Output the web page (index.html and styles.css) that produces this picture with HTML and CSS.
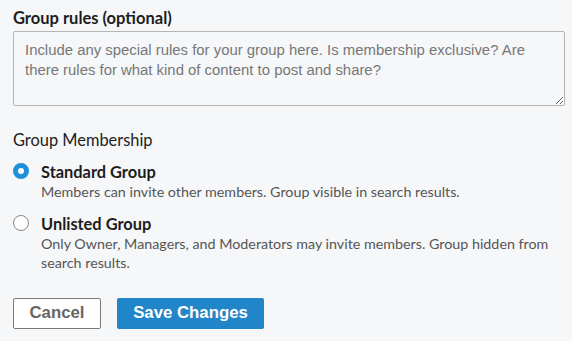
FILE: index.html
```html
<!DOCTYPE html>
<html lang="en">
<head>
    <meta charset="UTF-8">
    <meta name="viewport" content="width=device-width, initial-scale=1.0">
    <title>Group settings</title>
    <link rel="stylesheet" href="styles.css">
</head>
<body>
    <form class="group-form">
        <label class="field-label" for="rules">Group rules (optional)</label>
        <textarea id="rules" class="rules-box" placeholder="Include any special rules for your group here. Is membership exclusive? Are there rules for what kind of content to post and share?"></textarea>

        <div class="section-title">Group Membership</div>

        <label class="option">
            <input type="radio" name="membership" value="standard" checked>
            <span class="radio-mark"></span>
            <span class="option-text">
                <span class="option-name">Standard Group</span>
                <span class="option-desc">Members can invite other members. Group visible in search results.</span>
            </span>
        </label>

        <label class="option">
            <input type="radio" name="membership" value="unlisted">
            <span class="radio-mark"></span>
            <span class="option-text">
                <span class="option-name">Unlisted Group</span>
                <span class="option-desc">Only Owner, Managers, and Moderators may invite members. Group hidden from search results.</span>
            </span>
        </label>

        <div class="actions">
            <button type="button" class="btn btn-cancel">Cancel</button>
            <button type="submit" class="btn btn-save">Save Changes</button>
        </div>
    </form>
</body>
</html>
```

FILE: styles.css
```css
body {
    margin: 0;
    background-color: #f6f7f9;
    font-family: Lato, "Open Sans", sans-serif;
    color: #222;
}
.group-form {
    padding: 7px 7px 0 13px;
}
.field-label {
    display: block;
    font-size: 16.5px;
    font-weight: bold;
    line-height: 22px;
    color: #1d1d1d;
}
.rules-box {
    display: block;
    width: 100%;
    height: 75px;
    margin-top: 2px;
    padding: 8px 24px 8px 11px;
    box-sizing: border-box;
    border: 1px solid #b5b5b5;
    border-radius: 2px;
    background-color: #f6f7f9;
    font-family: "Liberation Sans", Arial, sans-serif;
    font-size: 14.9px;
    line-height: 20px;
    resize: vertical;
}
.rules-box::placeholder {
    color: #777;
}
.section-title {
    margin-top: 23px;
    font-size: 16.4px;
    line-height: 22px;
    color: #222;
}
.option {
    display: flex;
    align-items: flex-start;
    margin-top: 11px;
    cursor: pointer;
}
.option + .option {
    margin-top: 12px;
}
.option input {
    display: none;
}
.radio-mark {
    flex: none;
    width: 16px;
    height: 16px;
    margin: 1px 12px 0 0;
    box-sizing: border-box;
    border: 1px solid #888;
    border-radius: 50%;
    background-color: #fff;
}
.option input:checked + .radio-mark {
    border: 5px solid #1f8fd8;
    background-color: #fff;
}
.option-text {
    display: flex;
    flex-direction: column;
}
.option-name {
    font-size: 16.4px;
    font-weight: bold;
    line-height: 20px;
    color: #1d1d1d;
}
.option-desc {
    font-size: 14.3px;
    line-height: 19.5px;
    color: #555;
}
.actions {
    display: flex;
    gap: 16px;
    margin-top: 25px;
}
.btn {
    height: 31px;
    padding: 0;
    border-radius: 2px;
    font-family: "Liberation Sans", Arial, sans-serif;
    font-size: 16.8px;
    font-weight: bold;
    cursor: pointer;
}
.btn-cancel {
    width: 88px;
    border: 1px solid #7a7a7a;
    background-color: #fff;
    color: #666;
}
.btn-save {
    width: 147px;
    border: none;
    background-color: #2086c9;
    color: #fff;
}
```
